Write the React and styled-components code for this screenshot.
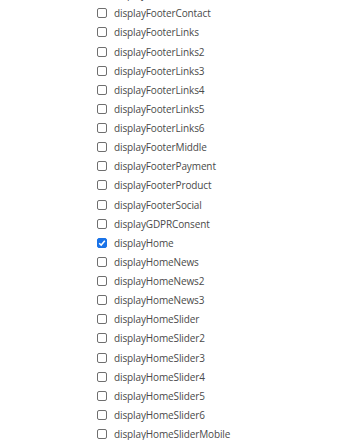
import React from "react";
import styled, { createGlobalStyle } from "styled-components";

const Global = createGlobalStyle`
  html, body { margin: 0; padding: 0; background: #fff; overflow: hidden; }
  body { font-family: "Open Sans", "Liberation Sans", sans-serif; }
`;

const List = styled.ul`
  list-style: none;
  margin: -15.4px 0 0 0;
  padding: 0 0 0 97px;
`;

const Row = styled.li`
  display: flex;
  align-items: center;
  height: 19.14px;
  gap: 7px;
`;

const Box = styled.span`
  box-sizing: border-box;
  width: 10px;
  height: 10px;
  border-radius: 2px;
  border: 1px solid ${(p) => (p.$checked ? "#1a73e8" : "#6f6f6f")};
  background: ${(p) => (p.$checked ? "#1a73e8" : "#fff")};
  display: flex;
  align-items: center;
  justify-content: center;
  flex: none;
`;

const Label = styled.span`
  font-size: 10px;
  letter-spacing: -0.12px;
  color: #4a4a4a;
  line-height: 1;
  white-space: nowrap;
`;

const items = [
  "displayFooterBefore",
  "displayFooterContact",
  "displayFooterLinks",
  "displayFooterLinks2",
  "displayFooterLinks3",
  "displayFooterLinks4",
  "displayFooterLinks5",
  "displayFooterLinks6",
  "displayFooterMiddle",
  "displayFooterPayment",
  "displayFooterProduct",
  "displayFooterSocial",
  "displayGDPRConsent",
  "displayHome",
  "displayHomeNews",
  "displayHomeNews2",
  "displayHomeNews3",
  "displayHomeSlider",
  "displayHomeSlider2",
  "displayHomeSlider3",
  "displayHomeSlider4",
  "displayHomeSlider5",
  "displayHomeSlider6",
  "displayHomeSliderMobile",
];

export default function App() {
  return (
    <>
      <Global />
      <List>
        {items.map((name) => {
          const checked = name === "displayHome";
          return (
            <Row key={name}>
              <Box $checked={checked}>
                {checked && (
                  <svg width="8" height="8" viewBox="0 0 8 8">
                    <path d="M1.2 4.2 L3.2 6.1 L6.8 1.8" fill="none" stroke="#fff" strokeWidth="1.5" />
                  </svg>
                )}
              </Box>
              <Label>{name}</Label>
            </Row>
          );
        })}
      </List>
    </>
  );
}
